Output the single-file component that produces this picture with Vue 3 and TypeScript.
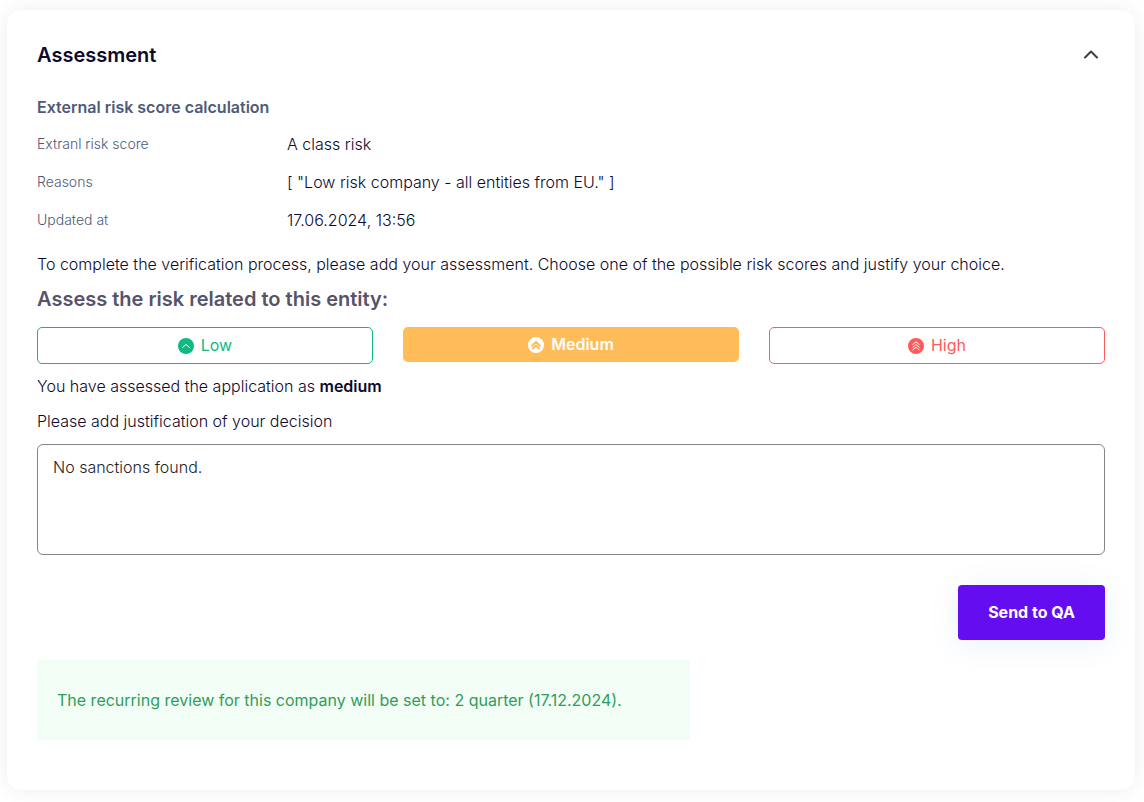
<script setup lang="ts">
import { ref } from 'vue'

type Level = 'low' | 'medium' | 'high'

interface Option {
  id: Level
  label: string
  chevrons: string[]
}

const details: { label: string; value: string }[] = [
  { label: 'Extranl risk score', value: 'A class risk' },
  { label: 'Reasons', value: '[ "Low risk company - all entities from EU." ]' },
  { label: 'Updated at', value: '17.06.2024, 13:56' },
]

const options: Option[] = [
  { id: 'low', label: 'Low', chevrons: ['M4.5 9.5 8 6.5l3.5 3'] },
  { id: 'medium', label: 'Medium', chevrons: ['M4.2 8.6 8 5l3.8 3.6', 'M5 11.3 8 8.4l3 2.9'] },
  { id: 'high', label: 'High', chevrons: ['M4.8 6.5 8 3.8l3.2 2.7', 'M4.8 9.2 8 6.5l3.2 2.7', 'M4.8 11.9 8 9.2l3.2 2.7'] },
]

const open = ref(true)
const selected = ref<Level>('medium')
const justification = ref('No sanctions found.')
</script>

<template>
  <main class="page">
    <section class="card">
      <header class="card-header">
        <h1>Assessment</h1>
        <button class="toggle" type="button" aria-label="Toggle assessment" :aria-expanded="open" @click="open = !open">
          <svg width="16" height="16" viewBox="0 0 16 16" fill="none" stroke="#383e45" stroke-width="2" stroke-linecap="round" stroke-linejoin="round">
            <path d="M2 10.5 8 4.5l6 6" />
          </svg>
        </button>
      </header>

      <div v-if="open" class="card-body">
        <h2>External risk score calculation</h2>
        <dl class="details">
          <div v-for="item in details" :key="item.label" class="detail">
            <dt>{{ item.label }}</dt>
            <dd>{{ item.value }}</dd>
          </div>
        </dl>

        <p class="intro">
          To complete the verification process, please add your assessment. Choose one of the possible risk scores and justify your choice.
        </p>
        <h3>Assess the risk related to this entity:</h3>

        <div class="options">
          <button
            v-for="option in options"
            :key="option.id"
            type="button"
            class="option"
            :class="[option.id, { selected: selected === option.id }]"
            :aria-pressed="selected === option.id"
            @click="selected = option.id"
          >
            <svg class="badge" width="16" height="16" viewBox="0 0 16 16" aria-hidden="true">
              <circle cx="8" cy="8" r="8" />
              <path v-for="d in option.chevrons" :key="d" :d="d" />
            </svg>
            {{ option.label }}
          </button>
        </div>

        <p class="result">You have assessed the application as <strong>{{ selected }}</strong></p>
        <label for="justification">Please add justification of your decision</label>
        <textarea id="justification" v-model="justification"></textarea>

        <div class="actions">
          <button class="send" type="button">Send to QA</button>
        </div>

        <p class="notice">The recurring review for this company will be set to: 2 quarter (17.12.2024).</p>
      </div>
    </section>
  </main>
</template>

<style>
body {
  margin: 0;
  background: #fff;
}
</style>

<style scoped>
.page {
  padding: 10px 9px 12px 7px;
  font-family: Inter, "Liberation Sans", sans-serif;
  font-size: 16px;
  line-height: 24px;
  font-weight: 300;
  color: #0d0a2c;
}

.card {
  padding: 30px 30px 50px;
  border-radius: 14px;
  background: #fff;
  box-shadow: 0 0 20px rgba(0, 0, 0, 0.07);
}

h1, h2, h3, p, dl, dd {
  margin: 0;
}

.card-header {
  display: flex;
  align-items: center;
  justify-content: space-between;
  margin-bottom: 25px;
}

h1 {
  font-size: 20px;
  line-height: 30px;
  font-weight: 600;
}

.toggle {
  display: flex;
  padding: 6px;
  border: 0;
  background: none;
  cursor: pointer;
}

.card-body {
  display: flex;
  flex-direction: column;
}

h2 {
  font-size: 16px;
  line-height: 24px;
  font-weight: 600;
  color: #4f5b76;
}

.details {
  display: grid;
  gap: 14px;
  margin: 13px 0 20px;
}

.detail {
  display: grid;
  grid-template-columns: 250px 1fr;
}

dt {
  font-size: 14px;
  color: #4f5b76;
}

h3 {
  margin: 8px 0 13px;
  font-size: 20px;
  line-height: 30px;
  font-weight: 600;
  color: #56536b;
}

.options {
  display: grid;
  grid-template-columns: repeat(3, 1fr);
  align-items: start;
  gap: 30px;
  margin-bottom: 10px;
}

.option {
  display: flex;
  align-items: center;
  justify-content: center;
  gap: 7px;
  padding: 5px 12px;
  border: 1px solid currentColor;
  border-radius: 5px;
  background: #fff;
  font: inherit;
  line-height: 25px;
  font-weight: 400;
  cursor: pointer;
}

.badge circle {
  fill: currentColor;
}

.badge path {
  fill: none;
  stroke: #fff;
  stroke-width: 1;
  stroke-linecap: round;
  stroke-linejoin: round;
}

.low {
  color: #10b981;
}

.medium {
  color: #ffbc58;
}

.high {
  color: #ff5a5a;
}

.option.selected {
  border: 0;
  color: #fff;
  font-weight: 600;
}

.low.selected {
  background: #10b981;
}

.medium.selected {
  background: #ffbc58;
}

.high.selected {
  background: #ff5a5a;
}

.low.selected .badge path {
  stroke: #10b981;
}

.medium.selected .badge path {
  stroke: #ffbc58;
  stroke-width: 2;
}

.high.selected .badge path {
  stroke: #ff5a5a;
}

strong {
  font-weight: 600;
}

label {
  margin: 11px 0;
}

textarea {
  box-sizing: border-box;
  width: 100%;
  height: 111px;
  padding: 10px 15px;
  border: 1px solid #858585;
  border-radius: 6px;
  background: #fff;
  font: inherit;
  color: #212529;
  resize: none;
}

.actions {
  display: flex;
  justify-content: flex-end;
  margin: 30px 0 20px;
}

.send {
  padding: 15px 30px;
  border: 0;
  border-radius: 4px;
  background: #640df1;
  box-shadow: 0 4px 30px rgba(0, 120, 220, 0.1);
  font: inherit;
  line-height: 25px;
  font-weight: 700;
  color: #fff;
  cursor: pointer;
}

.notice {
  align-self: flex-start;
  padding: 28px 68px 28px 20px;
  background: #f2fdf6;
  font-weight: 400;
  color: #2f9e5b;
}
</style>
